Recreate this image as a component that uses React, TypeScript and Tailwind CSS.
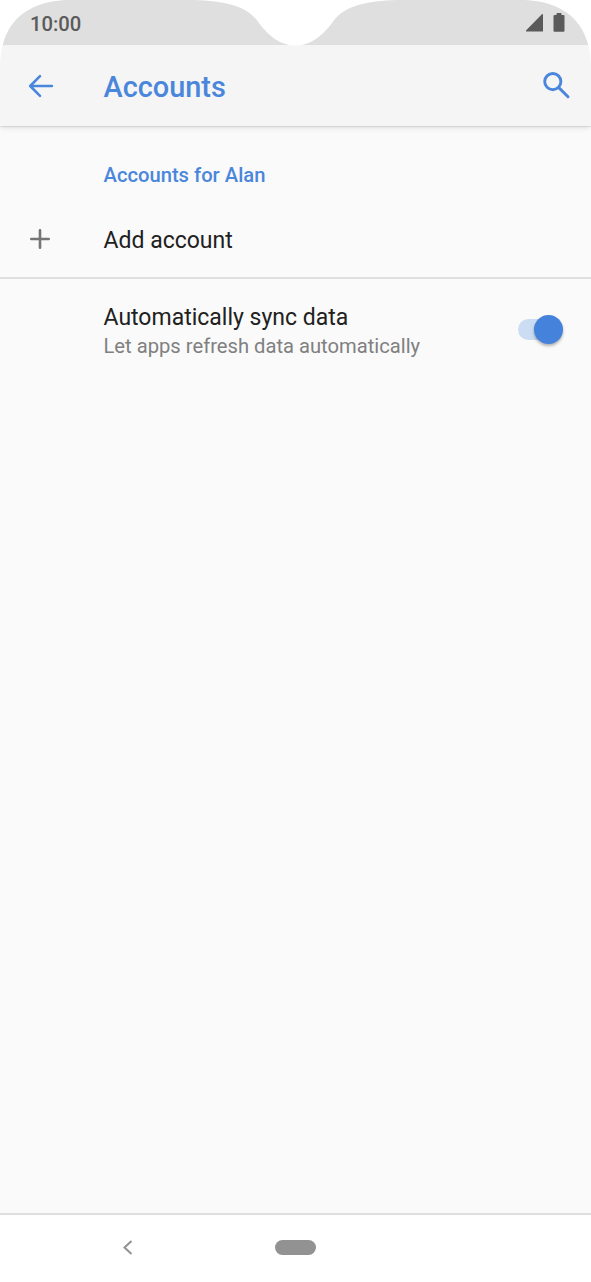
import React from 'react';

const BackIcon = () => (
  <svg className="w-[26px] h-[24px]" viewBox="0 0 26 24" fill="none" stroke="currentColor" strokeWidth="2.6" strokeLinecap="round" strokeLinejoin="round">
    <path d="M12 2.2 2.2 12l9.8 9.8M2.2 12h21.7" />
  </svg>
);

const SearchIcon = () => (
  <svg className="w-[28px] h-[28px]" viewBox="0 0 28 28" fill="none" stroke="currentColor" strokeWidth="2.9">
    <circle cx="9.8" cy="10.6" r="8.1" />
    <path d="M15.8 16.6l9.2 9.2" strokeLinecap="round" />
  </svg>
);

const SignalIcon = () => (
  <svg className="w-[18px] h-[18px]" viewBox="0 0 18 18" fill="currentColor">
    <path d="M17 .6V17a.6.6 0 0 1-.6.6H.7c-.7 0-1-.8-.5-1.3L15.900.3c.5-.5 1.100-.3 1.100.3z" />
  </svg>
);

const BatteryIcon = () => (
  <svg className="w-[12px] h-[19px]" viewBox="0 0 12 19" fill="currentColor">
    <path d="M1.5 2h2V.8c0-.4.3-.8.8-.8h3.4c.5 0 .8.4.8.8V2h2a1 1 0 0 1 1 1v14.7a1 1 0 0 1-1 1h-9a1 1 0 0 1-1-1V3a1 1 0 0 1 1-1z" />
  </svg>
);

// Rounded screen corners and the camera notch
const ScreenCutout = () => (
  <svg className="absolute z-20 inset-x-0 top-0 w-[591px] h-[70px] pointer-events-none" viewBox="0 0 591 70" fill="#ffffff">
    <path d="M0 0H66C32 1.5 10 17 2.7 45 1.2 51 .4 57 0 68z" />
    <path d="M591 0H525C559 1.5 581 17 588.3 45 589.8 51 590.6 57 591 68z" />
    <path d="M194 0C225 1 245 6 256 19C266 33 278 45.5 295.5 45.5C313 45.5 325 33 335 19C346 6 366 1 397 0z" />
  </svg>
);

const Switch = () => (
  <div className="relative w-[45px] h-[30px] flex items-center">
    <div className="w-[38px] h-[21px] rounded-full bg-[#ccddf3]" />
    <div className="absolute right-0 top-[0.5px] w-[29px] h-[29px] rounded-full bg-[#4482dc] shadow-[0_2px_3px_rgba(0,0,0,0.3)]" />
  </div>
);

const App: React.FC = () => {
  return (
    <div className="relative w-full h-screen flex flex-col overflow-hidden bg-[#fafafa] font-[Roboto,sans-serif]">
      {/* Status bar */}
      <div className="h-[45px] shrink-0 bg-[#dfdfdf] text-[#5a5a5a] flex items-center justify-between pl-[30px] pr-[26px]">
        <span className="text-[20.2px] font-medium leading-6 pt-[3px]">10:00</span>
        <div className="flex items-center gap-[9px]">
          <SignalIcon />
          <BatteryIcon />
        </div>
      </div>

      {/* App bar */}
      <header className="z-10 h-[81px] shrink-0 bg-[#f5f5f5] text-[#4a86db] flex items-center pl-[28px] pr-[20px] shadow-[0_1px_1px_rgba(0,0,0,0.08),0_3px_5px_-1px_rgba(0,0,0,0.1)]">
        <BackIcon />
        <h1 className="flex-1 pl-[49.5px] pt-[3px] text-[28.9px] leading-8 font-medium">Accounts</h1>
        <div className="pb-[1px]">
          <SearchIcon />
        </div>
      </header>

      <main className="flex-1">
        <h2 className="pt-[37px] pl-[103.5px] text-[20.2px] leading-6 font-medium text-[#4a86db]">Accounts for Alan</h2>

        <div className="h-[92px] flex items-center pt-[13px] pl-[30px] border-b-2 border-[#e0e0e0]">
          <svg className="w-[20px] h-[20px] text-[#757575]" viewBox="0 0 20 20" stroke="currentColor" strokeWidth="2.6" strokeLinecap="round">
            <path d="M10 1.3v17.4M1.3 10h17.4" />
          </svg>
          <span className="pl-[53.5px] pt-[4px] text-[23px] leading-7 text-[#212121]">Add account</span>
        </div>

        <div className="flex items-start justify-between pt-[25px] pl-[103.5px] pr-[28px]">
          <div>
            <p className="text-[23px] leading-7 text-[#212121]">Automatically sync data</p>
            <p className="pt-[2px] text-[20.2px] leading-6 text-[#808080]">Let apps refresh data automatically</p>
          </div>
          <div className="pt-[10px]">
            <Switch />
          </div>
        </div>
      </main>

      {/* Navigation bar */}
      <nav className="h-[69px] shrink-0 bg-white border-t-2 border-[#dedede] flex items-center pb-[2px] pl-[122px]">
        <svg className="w-[11px] h-[16px] text-[#929292]" viewBox="0 0 11 16" fill="none" stroke="currentColor" strokeWidth="2">
          <path d="M9.5.9 2.5 7.5l7 6.6" />
        </svg>
        <div className="ml-[142px] w-[41px] h-[15px] rounded-full bg-[#929292]" />
      </nav>

      <ScreenCutout />
    </div>
  );
};

export default App;
